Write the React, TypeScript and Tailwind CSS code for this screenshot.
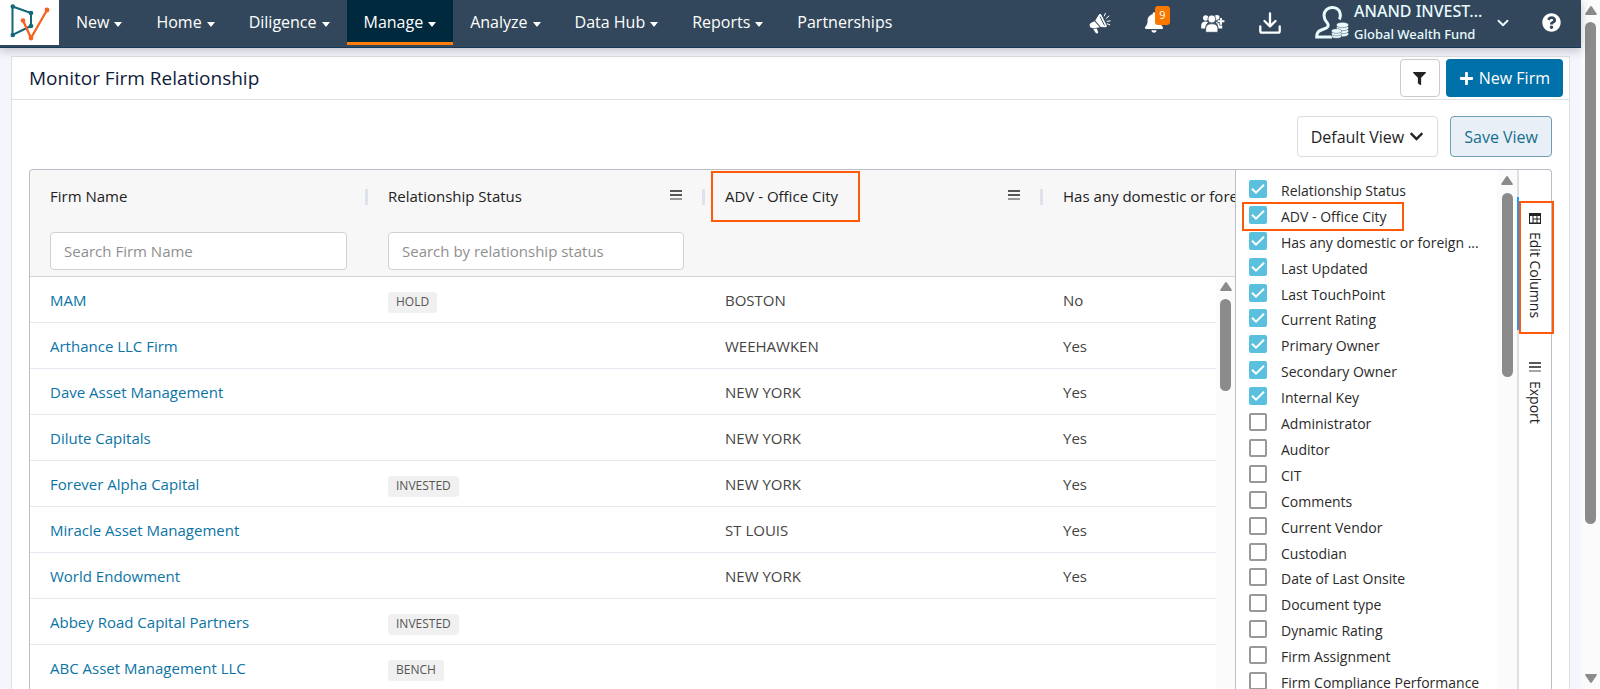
import { useState } from "react";
import { FaBell, FaChevronDown, FaFilter, FaPlus, FaQuestionCircle } from "react-icons/fa";
import { ChevronDown } from "lucide-react";

const navItems = [
  { label: "New", menu: true },
  { label: "Home", menu: true },
  { label: "Diligence", menu: true },
  { label: "Manage", menu: true, active: true },
  { label: "Analyze", menu: true },
  { label: "Data Hub", menu: true },
  { label: "Reports", menu: true },
  { label: "Partnerships", menu: false },
];

const firms = [
  { name: "MAM", status: "HOLD", city: "BOSTON", foreign: "No" },
  { name: "Arthance LLC Firm", status: "", city: "WEEHAWKEN", foreign: "Yes" },
  { name: "Dave Asset Management", status: "", city: "NEW YORK", foreign: "Yes" },
  { name: "Dilute Capitals", status: "", city: "NEW YORK", foreign: "Yes" },
  { name: "Forever Alpha Capital", status: "INVESTED", city: "NEW YORK", foreign: "Yes" },
  { name: "Miracle Asset Management", status: "", city: "ST LOUIS", foreign: "Yes" },
  { name: "World Endowment", status: "", city: "NEW YORK", foreign: "Yes" },
  { name: "Abbey Road Capital Partners", status: "INVESTED", city: "", foreign: "" },
  { name: "ABC Asset Management LLC", status: "BENCH", city: "", foreign: "" },
];

const columns = [
  { label: "Relationship Status", on: true },
  { label: "ADV - Office City", on: true, marked: true },
  { label: "Has any domestic or foreign ...", on: true },
  { label: "Last Updated", on: true },
  { label: "Last TouchPoint", on: true },
  { label: "Current Rating", on: true },
  { label: "Primary Owner", on: true },
  { label: "Secondary Owner", on: true },
  { label: "Internal Key", on: true },
  { label: "Administrator", on: false },
  { label: "Auditor", on: false },
  { label: "CIT", on: false },
  { label: "Comments", on: false },
  { label: "Current Vendor", on: false },
  { label: "Custodian", on: false },
  { label: "Date of Last Onsite", on: false },
  { label: "Document type", on: false },
  { label: "Dynamic Rating", on: false },
  { label: "Firm Assignment", on: false },
  { label: "Firm Compliance Performance", on: false },
];

function Logo() {
  return (
    <svg viewBox="0 0 59 45" className="h-[45px] w-[59px]" fill="none" strokeWidth="2">
      <path d="M12.5 6.5 31 13v13L12.5 35z" stroke="#12677a" />
      <g fill="#12677a">
        <circle cx="12.8" cy="6.5" r="2.3" />
        <circle cx="31" cy="13" r="2.3" />
        <circle cx="31" cy="26" r="2.3" />
        <circle cx="12.8" cy="35" r="2.3" />
      </g>
      <path d="M23 20.5 31 38 47 10" stroke="#f9611e" strokeWidth="2.3" />
      <g fill="#f9611e">
        <circle cx="23" cy="20.5" r="2.3" />
        <circle cx="31" cy="38" r="2.4" />
        <circle cx="47" cy="10" r="2.4" />
      </g>
    </svg>
  );
}

function Caret() {
  return (
    <svg viewBox="0 0 8 5" className="mt-1 h-[5px] w-2" fill="currentColor">
      <path d="M0 0h8L4.6 4.3a.8.8 0 0 1-1.2 0z" />
    </svg>
  );
}

function MegaphoneIcon() {
  return (
    <svg viewBox="0 0 22 22" className="h-[22px] w-[22px]" fill="#fff">
      <path d="M10 2.5c.9-.9 2-.4 2.500.5l5.200 10.500c.4 1-.3 1.800-1.300 1.700l-4.600-.3L6.200 8.500z" />
      <path d="M5.500 9.200 10.800 15.200 5.300 16.200C3 16.700.5 15.400.6 13c.1-1.600 1.500-2.200 2.600-2.700z" />
      <path d="m4.200 17 3.500-.6 1.400 3.500c.5 1.500-1.800 2.300-2.500.9z" />
      <path d="M11 4.500 15.500 13.500" stroke="#32475b" strokeWidth=".9" />
      <path d="M15.300 4 16.400 1.300M17 6.500 20 4M18 9.300l3.200-.4M18.200 11.800l2.600 1" stroke="#fff" strokeWidth="1" strokeLinecap="round" />
    </svg>
  );
}

function GroupAddIcon() {
  return (
    <svg viewBox="0 0 24 20" className="h-5 w-6" fill="#fff">
      <circle cx="4.700" cy="5" r="2.700" />
      <circle cx="16" cy="4.600" r="2.700" />
      <path d="M.2 15.500v-3C.2 10 2 8.600 4.600 8.600c1 0 1.700.2 2.500.7-1.800 1.300-2.800 3.500-2.900 6.200zM17.400 15.500c0-2.700-1-4.900-2.700-6.200.7-.5 1.500-.7 2.300-.7 2.500 0 4.200 1.500 4.200 3.900v3z" />
      <circle cx="10.800" cy="6" r="4" stroke="#32475b" strokeWidth=".8" />
      <path d="M4.700 19.300v-3.600c0-3 2.200-4.900 5.200-4.900h1.800c3 0 5.200 1.900 5.200 4.900v3.600z" stroke="#32475b" strokeWidth=".8" />
      <path d="M20.300 4.200v8.200M16.300 8.300h7.700" stroke="#32475b" strokeWidth="3.800" />
      <path d="M20 4.900v6.800M16.600 8.300h6.800" stroke="#fff" strokeWidth="1.900" />
    </svg>
  );
}

function DownloadIcon() {
  return (
    <svg viewBox="0 0 22 22" className="h-[22px] w-[22px]" fill="none" stroke="#fff" strokeWidth="2.300" strokeLinecap="round" strokeLinejoin="round">
      <path d="M11 1.500v12M5.500 9 11 14.300 16.500 9" />
      <path d="M1.300 14.500v4.500q0 1.700 1.700 1.700h16q1.700 0 1.700-1.700v-4.500" />
    </svg>
  );
}

function InvestorIcon() {
  return (
    <svg viewBox="0 0 34 34" className="h-[34px] w-[34px]" fill="none" stroke="#e9fbff">
      <path
        d="M24.500 14.500c.8-1.700 1.200-4 .6-6.300C24.200 4.400 20.800 2.300 17 2.500c-4.600.2-8 3.500-8 8 0 3.500 1.500 5.500 3.300 7.600 1.500 1.800 1 3.800-.8 4.700l-6.300 2.700C2.500 26.700 1.700 28.500 1.700 32H17"
        strokeWidth="3"
      />
      <g fill="#e9fbff" stroke="#32475b" strokeWidth=".5">
        <ellipse cx="27.500" cy="29" rx="6.200" ry="2.700" />
        <ellipse cx="27.500" cy="26" rx="6.200" ry="2.700" />
        <ellipse cx="27.500" cy="23" rx="6.200" ry="2.700" />
        <ellipse cx="27.500" cy="20" rx="6.200" ry="2.700" />
        <ellipse cx="21.500" cy="31" rx="5" ry="2.300" />
        <ellipse cx="21.500" cy="28.500" rx="5" ry="2.300" />
        <ellipse cx="21.500" cy="26" rx="5" ry="2.300" />
      </g>
    </svg>
  );
}

function Triangle({ down = false }: { down?: boolean }) {
  return (
    <svg viewBox="0 0 12 9" className="h-[9px] w-3 shrink-0" fill="#8b8b8b">
      <path d={down ? "M1 0h10q1.300.300.6 1.500L7 8.300q-1 1.200-2 0L.4 1.500Q-.2.300 1 0z" : "M1 9h10q1.300-.300.6-1.500L7 .7q-1-1.200-2 0L.4 7.500Q-.2 8.700 1 9z"} />
    </svg>
  );
}

function MenuLines() {
  return (
    <svg viewBox="0 0 12 10" className="h-[10px] w-3" stroke="#222" strokeWidth="1.300">
      <path d="M0 1h12M0 5h12" />
      <path d="M0 9h12" stroke="#777" />
    </svg>
  );
}

function HeaderCell({ label, menu = false, marked = false, last = false, placeholder = "" }: { label: string; menu?: boolean; marked?: boolean; last?: boolean; placeholder?: string }) {
  return (
    <th scope="col" className="h-[107px] border-b border-[#cfd5da] bg-[#f7f7f7] p-0 text-left align-top font-normal">
      <div className="flex h-[53px] items-center overflow-x-clip pl-5">
        <span className="relative whitespace-nowrap">
          {label}
          {marked && <span className="pointer-events-none absolute -top-[14px] -right-[22px] -bottom-[14px] -left-[14px] border-2 border-[#ff5a0a]" />}
        </span>
        {!last && (
          <span className="ml-auto flex items-center gap-5">
            {menu && (
              <button type="button" aria-label={label + " menu"} className="pb-1">
                <MenuLines />
              </button>
            )}
            <span className="h-4 w-[3px] bg-[#dde2ec]" />
          </span>
        )}
      </div>
      {placeholder && (
        <div className="pt-[9px] pr-[21px] pl-5">
          <input
            type="text"
            aria-label={placeholder}
            placeholder={placeholder}
            className="h-[38px] w-full rounded border border-[#ced2d6] bg-white px-[13px] text-[15px] text-[#333] placeholder:text-[#8f8f8f]"
          />
        </div>
      )}
    </th>
  );
}

function ColumnToggle({ label, on, marked = false }: { label: string; on: boolean; marked?: boolean }) {
  const [checked, setChecked] = useState(on);
  return (
    <label className="relative flex items-center gap-[14px]">
      <span className="grid place-items-center">
        <input
          type="checkbox"
          checked={checked}
          onChange={() => setChecked(!checked)}
          className="col-start-1 row-start-1 h-[18px] w-[18px] appearance-none rounded-[2px] border-2 border-[#999] bg-white checked:border-[#5bc0de] checked:bg-[#5bc0de]"
        />
        {checked && (
          <svg viewBox="0 0 18 18" className="pointer-events-none col-start-1 row-start-1 h-[18px] w-[18px]" fill="none" stroke="#fff" strokeWidth="2">
            <path d="m3 8.700 4 4L15 4.700" />
          </svg>
        )}
      </span>
      <span className="pt-1 text-sm whitespace-nowrap text-[#2a2a2a]">{label}</span>
      {marked && <span className="pointer-events-none absolute top-0 right-[93px] -bottom-[3px] -left-[7px] border-2 border-[#ff5a0a]" />}
    </label>
  );
}

export default function App() {
  return (
    <div className="flex h-screen overflow-hidden bg-[#f5f6fb] font-['Open_Sans','Noto_Sans',sans-serif] text-[15px] text-[#333]">
      <div className="flex min-w-0 flex-1 flex-col">
        <header className="relative flex h-12 shrink-0 border-b border-[#153a56] bg-[#32475b] text-white shadow-[0_3px_9px_rgba(40,40,70,0.25)]">
          <a href="#" aria-label="Home page" className="h-[45px] bg-white">
            <Logo />
          </a>
          <nav className="flex h-[45px]">
            {navItems.map((item) => (
              <a
                key={item.label}
                href="#"
                className={
                  item.active
                    ? "flex items-center gap-[5px] border-b-[3px] border-[#ff7d0a] bg-[#00293d] px-[17px] pt-[2px] text-base"
                    : "flex items-center gap-[5px] border-b-[3px] border-transparent px-[17px] pt-[2px] text-base"
                }
              >
                {item.label}
                {item.menu && <Caret />}
              </a>
            ))}
          </nav>
          <div className="ml-auto flex h-[45px] items-center gap-[34px] pr-5">
            <button type="button" aria-label="Announcements">
              <MegaphoneIcon />
            </button>
            <button type="button" aria-label="Notifications" className="relative w-[22px]">
              <FaBell className="h-[21px] w-[18px]" />
              <span className="absolute -top-[6px] left-[10px] flex h-[19px] w-[15px] items-center justify-center rounded-[3px] bg-[#f97800] text-[11px]">9</span>
            </button>
            <button type="button" aria-label="Add members">
              <GroupAddIcon />
            </button>
            <button type="button" aria-label="Downloads">
              <DownloadIcon />
            </button>
            <button type="button" className="flex items-center gap-[5px] pb-[2px] text-left text-[#e9fbff]">
              <InvestorIcon />
              <span className="flex w-[127px] flex-col font-['Noto_Sans',sans-serif] font-medium whitespace-nowrap">
                <span className="text-base leading-6">ANAND INVEST...</span>
                <span className="text-[13px] leading-[22px]">Global Wealth Fund</span>
              </span>
              <ChevronDown className="mt-[2px] ml-2 h-[18px] w-[18px]" strokeWidth={2.5} />
            </button>
            <button type="button" aria-label="Help" className="-ml-1">
              <FaQuestionCircle className="h-[19px] w-[19px]" />
            </button>
          </div>
        </header>

        <main className="mx-[11px] mt-2 flex min-h-0 flex-1 flex-col border border-b-0 border-[#dfe0e4] bg-white">
          <div className="flex h-[43px] shrink-0 items-center justify-between border-b border-[#dfe0e4] pr-[6px] pl-[17px]">
            <h1 className="text-[19px] text-[#10203a]">Monitor Firm Relationship</h1>
            <div className="flex gap-[6px]">
              <button type="button" aria-label="Filter" className="flex h-[38px] w-10 items-center justify-center rounded border border-[#cbcbcb] bg-white text-[#222]">
                <FaFilter className="h-[13px] w-[13px]" />
              </button>
              <button type="button" className="flex h-[38px] items-center gap-[5px] rounded bg-[#0070a8] px-[13px] text-base text-white">
                <FaPlus className="h-[15px] w-[15px]" />
                New Firm
              </button>
            </div>
          </div>

          <div className="flex shrink-0 justify-end gap-3 px-[17px] pt-4 pb-3 text-base">
            <button type="button" className="flex h-[41px] items-center gap-[5px] rounded border border-[#dcdcdc] bg-white px-[13px] text-[#222]">
              Default View
              <FaChevronDown className="h-[15px] w-[15px]" />
            </button>
            <button type="button" className="h-[41px] rounded border border-[#6f9fb0] bg-[#e9eff6] px-[13px] text-[#14708c]">
              Save View
            </button>
          </div>

          <div className="mx-[17px] flex min-h-0 flex-1 rounded-t border border-b-0 border-[#babfc7]">
            <div className="relative min-w-0 flex-1 overflow-hidden rounded-tl">
              <table className="w-full table-fixed border-separate border-spacing-0">
                <colgroup>
                  <col className="w-[338px]" />
                  <col className="w-[337px]" />
                  <col className="w-[338px]" />
                  <col />
                </colgroup>
                <thead className="text-[#222]">
                  <tr>
                    <HeaderCell label="Firm Name" placeholder="Search Firm Name" />
                    <HeaderCell label="Relationship Status" menu placeholder="Search by relationship status" />
                    <HeaderCell label="ADV - Office City" menu marked />
                    <HeaderCell label="Has any domestic or fore" last />
                  </tr>
                </thead>
                <tbody>
                  {firms.map((firm) => (
                    <tr key={firm.name}>
                      <td className="h-[46px] border-b border-[#e6e9f0] pt-[2px] pr-0 pb-0 pl-5">
                        <a href="#" className="text-[#0b74a5]">
                          {firm.name}
                        </a>
                      </td>
                      <td className="h-[46px] border-b border-[#e6e9f0] pt-[3px] pr-0 pb-0 pl-5">
                        {firm.status && (
                          <span className="inline-flex h-[21px] items-center rounded bg-[#f0f0f0] px-2 text-xs text-[#555]">{firm.status}</span>
                        )}
                      </td>
                      <td className="h-[46px] border-b border-[#e6e9f0] pt-[2px] pr-0 pb-0 pl-5 text-[#444]">{firm.city}</td>
                      <td className="h-[46px] border-b border-[#e6e9f0] pt-[2px] pr-0 pb-0 pl-5 text-[#444]">{firm.foreign}</td>
                    </tr>
                  ))}
                </tbody>
              </table>
              <div className="absolute top-[107px] right-0 bottom-0 flex w-[19px] flex-col items-center gap-2 bg-[#fbfbfb] pt-[5px]">
                <Triangle />
                <div className="h-[92px] w-[11px] rounded-full bg-[#8b8b8b]" />
              </div>
            </div>

            <aside className="flex shrink-0">
              <div className="flex w-[284px] justify-between overflow-hidden border-r-2 border-l border-r-[#dcdfe4] border-l-[#babfc7] bg-white">
                <div className="grid h-[524px] flex-1 auto-rows-fr pt-[6px] pl-[13px]">
                  {columns.map((column) => (
                    <ColumnToggle key={column.label} {...column} />
                  ))}
                </div>
                <div className="flex w-[20px] flex-col items-center gap-2 bg-[#fbfbfb] pt-[6px]">
                  <Triangle />
                  <div className="h-[184px] w-[11px] rounded-full bg-[#8b8b8b]" />
                </div>
              </div>
              <div className="flex w-8 flex-col items-center pt-[27px] text-sm text-[#222]">
                <button type="button" className="relative flex h-[133px] w-full flex-col items-center gap-2 pt-4">
                  <span className="absolute top-0 -left-[2px] h-full w-[2px] bg-[#2196f3]" />
                  <svg viewBox="0 0 12 11" className="h-[11px] w-3" fill="#222">
                    <path fillRule="evenodd" d="M0 0h12v11H0zM1 3v6.500h2.500V3zM4.500 3v2.500h3V3zM4.500 6.500v3h3v-3zM8.500 3v2.500H11V3zM8.500 6.500v3H11v-3z" />
                  </svg>
                  <span className="[writing-mode:vertical-rl]">Edit Columns</span>
                  <span className="pointer-events-none absolute top-1 -right-[3px] -bottom-1 left-0 border-2 border-[#ff5a0a]" />
                </button>
                <button type="button" className="mt-[32px] flex flex-col items-center gap-[9px]">
                  <MenuLines />
                  <span className="[writing-mode:vertical-rl]">Export</span>
                </button>
              </div>
            </aside>
          </div>
        </main>
      </div>

      <div className="flex w-[19px] shrink-0 flex-col items-center bg-[#fbfbfb] pt-[6px] pb-[6px]">
        <Triangle />
        <div className="mt-[7px] h-[502px] w-[11px] rounded-full bg-[#8b8b8b]" />
        <div className="mt-auto flex">
          <Triangle down />
        </div>
      </div>
    </div>
  );
}
